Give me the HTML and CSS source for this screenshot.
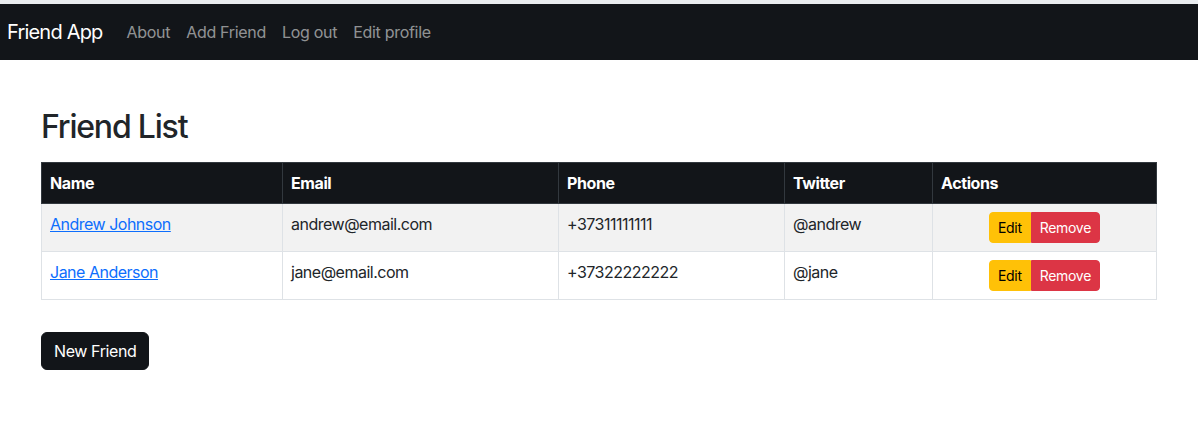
FILE: index.html
```html
<!DOCTYPE html>
<html>
<head>
<meta charset="utf-8">
<link rel="stylesheet" href="styles.css">
</head>
<body>
<nav class="navbar">
  <a class="brand" href="#">Friend App</a>
  <ul class="nav">
    <li><a href="#">About</a></li>
    <li><a href="#">Add Friend</a></li>
    <li><a href="#">Log out</a></li>
    <li><a href="#">Edit profile</a></li>
  </ul>
</nav>
<main class="container">
  <h1 class="title">Friend List</h1>
  <table class="table">
    <thead>
      <tr>
        <th class="c-name">Name</th>
        <th class="c-email">Email</th>
        <th class="c-phone">Phone</th>
        <th class="c-tw">Twitter</th>
        <th class="c-act">Actions</th>
      </tr>
    </thead>
    <tbody>
      <tr class="striped">
        <td><a href="#">Andrew Johnson</a></td>
        <td>andrew@email.com</td>
        <td>+37311111111</td>
        <td>@andrew</td>
        <td class="actions"><div class="btn-group"><button class="btn btn-warning">Edit</button><button class="btn btn-danger">Remove</button></div></td>
      </tr>
      <tr>
        <td><a href="#">Jane Anderson</a></td>
        <td>jane@email.com</td>
        <td>+37322222222</td>
        <td>@jane</td>
        <td class="actions"><div class="btn-group"><button class="btn btn-warning">Edit</button><button class="btn btn-danger">Remove</button></div></td>
      </tr>
    </tbody>
  </table>
  <button class="btn-new">New Friend</button>
</main>
</body>
</html>
```
FILE: styles.css
```css
* { box-sizing: border-box; }
html, body { margin: 0; padding: 0; }
body {
  font-family: Inter, "Liberation Sans", sans-serif;
  font-size: 16px;
  line-height: 1.5;
  color: #212529;
  background: #fff;
  border-top: 4px solid #e9ecef;
}
.navbar {
  background: #121519;
  height: 56px;
  display: flex;
  align-items: center;
  padding: 0 7px;
}
.brand {
  color: #fff;
  text-decoration: none;
  font-size: 20px;
  margin-right: 16px;
  letter-spacing: -0.8px;
}
.nav {
  list-style: none;
  display: flex;
  margin: 0;
  padding: 0;
}
.nav a {
  display: block;
  padding: 8px;
  color: rgba(255,255,255,0.55);
  text-decoration: none;
  letter-spacing: -0.3px;
}
.container {
  padding: 0 41px;
}
.title {
  font-size: 32px;
  font-weight: 500;
  line-height: 1.2;
  margin: 48px 0 16px;
  letter-spacing: -1.2px;
}
.table {
  width: 100%;
  border-collapse: collapse;
  margin-bottom: 32px;
}
.table th, .table td {
  border: 1px solid #dee2e6;
  padding: 8px;
  text-align: left;
  vertical-align: top;
  letter-spacing: -0.5px;
}
.table th {
  background: #121519;
  color: #fff;
  font-weight: 700;
  border-color: #32383e;
  height: 41px;
  letter-spacing: -0.4px;
}
.table td { height: 48px; }
.striped td { background: #f2f2f2; }
.table a { color: #0d6efd; }
.c-name { width: 241px; }
.c-email { width: 276px; }
.c-phone { width: 226px; }
.c-tw { width: 148px; }
.actions { text-align: center !important; }
.btn-group { display: inline-flex; vertical-align: top; }
.btn {
  font-family: inherit;
  font-size: 14px;
  line-height: 1.5;
  padding: 4px 8px;
  border: 1px solid transparent;
  cursor: pointer;
  letter-spacing: -0.3px;
}
.btn-warning {
  background: #ffc107;
  border-color: #ffc107;
  color: #000;
  border-radius: 4px 0 0 4px;
}
.btn-danger {
  background: #dc3545;
  border-color: #dc3545;
  color: #fff;
  border-radius: 0 4px 4px 0;
}
.btn-new {
  font-family: inherit;
  font-size: 16px;
  line-height: 1.5;
  padding: 6px 12px;
  background: #121519;
  color: #fff;
  border: 1px solid #121519;
  border-radius: 6px;
  letter-spacing: -0.4px;
}
```
